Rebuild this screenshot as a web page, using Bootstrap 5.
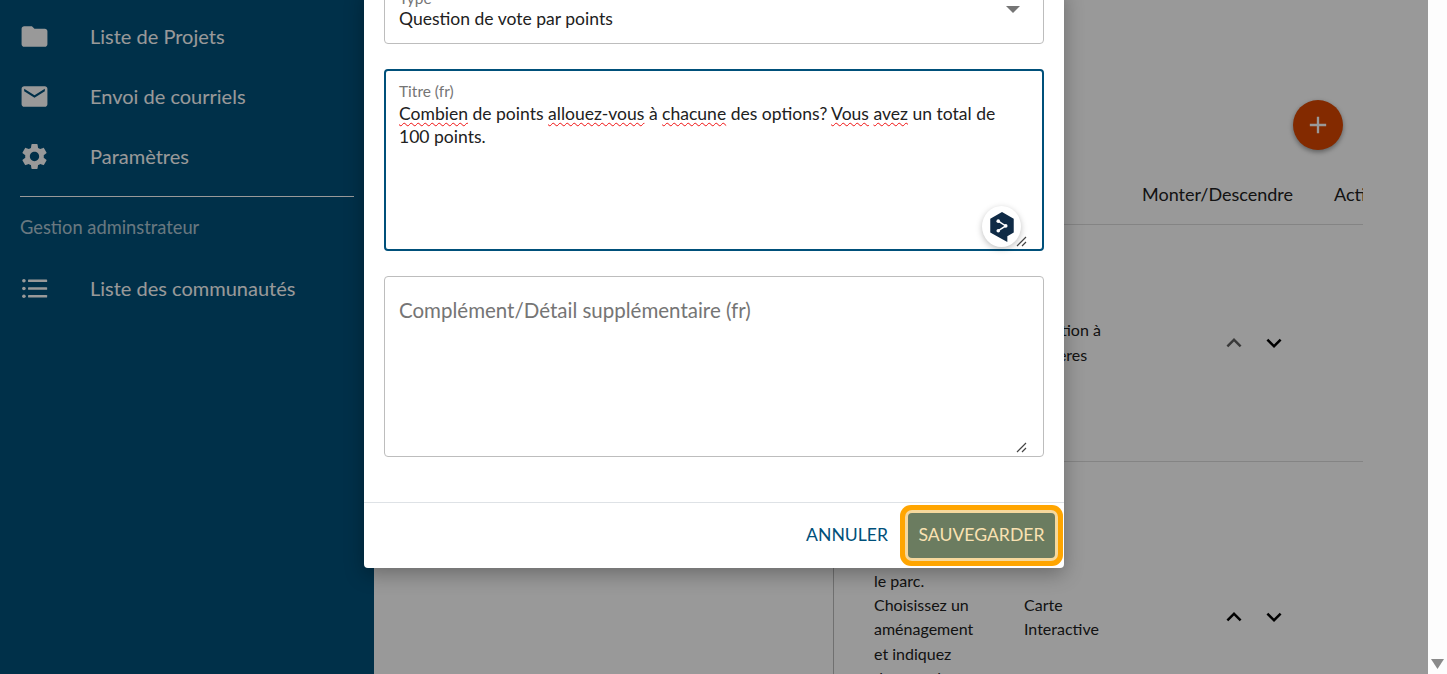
<!DOCTYPE html>
<html lang="fr">
<head>
    <meta charset="UTF-8">
    <meta name="viewport" content="width=device-width, initial-scale=1.0">
    <title>Liste de Projets</title>
    <link href="https://cdn.jsdelivr.net/npm/bootstrap@5.3.6/dist/css/bootstrap.min.css" rel="stylesheet">
    <style>
        html, body { height: 100%; overflow: hidden; }
        body { font-family: "Lato", "Liberation Sans", sans-serif; color: #212121; background: #fff; }
        .page-wrap { height: 674px; }
        .app-area { position: relative; overflow: hidden; }
        .fake-scroll { width: 19px; background: #fdfdfd; padding-bottom: 5px; }
        .fake-scroll svg { width: 13px; height: 10px; fill: #8a8a8a; }

        .side-bar { width: 374px; background: #00507a; color: #fff; padding: 6px 20px 0; }
        .side-item { height: 60px; font-size: 20px; }
        .side-item svg { width: 31px; height: 31px; fill: #fff; margin-left: -1px; margin-right: 40px; }
        .side-rule { border-top: 1px solid #fff; margin: 10px 0 0; opacity: 1; }
        .side-title { font-size: 18.3px; color: rgba(255, 255, 255, .7); line-height: 24px; margin: 18px 0 19px; }

        .blank-pane { width: 459px; }
        .list-pane { width: 530px; border-left: 1px solid #bbb; padding-top: 100px; overflow: hidden; }
        .add-btn { width: 50px; height: 50px; border-radius: 50%; background: #da4700; margin-right: 20px; box-shadow: 0 2px 5px rgba(0, 0, 0, .4); }
        .add-btn svg { width: 28px; height: 28px; fill: #fff; }
        .quest-table { table-layout: fixed; width: 640px; margin: 0; font-size: 16px; line-height: 24.3px; color: #212121; --bs-table-bg: transparent; --bs-table-color: #212121; }
        .quest-table th { font-size: 18px; font-weight: 400; height: 74px; padding: 0 0 17px; vertical-align: bottom; border-bottom: 1px solid #ddd; }
        .quest-table td { padding: 10px 0; vertical-align: middle; border-bottom: 1px solid #ddd; }
        .quest-table .col-one { padding-left: 40px; padding-right: 40px; }
        .quest-table .col-two { padding-right: 16px; }
        .row-first td { height: 237px; }
        .row-second td { height: 312px; }
        .move-btns { padding-left: 77px; gap: 10px; }
        .move-btns svg { width: 30px; height: 30px; fill: #000; }
        .move-btns .is-off { opacity: .62; }

        .veil { position: absolute; inset: 0; background: rgba(0, 0, 0, .4); }
        .edit-dialog { position: absolute; left: 364px; bottom: 106px; width: 700px; border: 0; border-radius: 4px; background: #fff; box-shadow: 0 6px 20px rgba(0, 0, 0, .3); }
        .edit-body { padding: 0 20px 45px; gap: 25px; }
        .edit-field { position: relative; border: 1px solid #bdbdbd; border-radius: 4px; padding: 0 14px; color: #212121; background: #fff; }
        .field-type { height: 56px; padding-top: 1px; }
        .field-type .field-label { line-height: 16px; margin-bottom: 1px; }
        .field-title { height: 182px; border: 2px solid #00507a; padding: 12px 13px 0; }
        .field-title .field-label { margin-bottom: 2px; }
        .field-extra { height: 181px; padding-top: 19px; font-size: 20.5px; line-height: 28px; color: #757575; }
        .field-label { font-size: 15.5px; color: #757575; line-height: 17px; }
        .field-value { font-size: 17.55px; line-height: 23px; }
        .spell { text-decoration: underline wavy #f01010 1px; text-underline-offset: 2px; text-decoration-skip-ink: none; }
        .caret-down { position: absolute; right: 23px; top: 17px; width: 0; height: 0; border-left: 7px solid transparent; border-right: 7px solid transparent; border-top: 7px solid #757575; }
        .grip { position: absolute; right: 15px; bottom: 2px; width: 11px; height: 11px; stroke: #444; stroke-width: 1.2; fill: none; }
        .field-extra .grip { right: 16px; bottom: 3px; }
        .deepl-spot { position: absolute; right: 21px; bottom: 2px; width: 39px; height: 41px; border-radius: 50%; background: #fff; box-shadow: 0 2px 6px rgba(0, 0, 0, .25); }
        .deepl-spot svg { width: 26px; height: 32px; }

        .edit-foot { height: 66px; padding: 0 9px 0 0; gap: 20px; border-top: 1px solid #dee2e6; }
        .btn-undo { font-size: 17.6px; color: #00507a; padding: 0; border: 0; }
        .btn-undo:hover { color: #00507a; }
        .btn-save { font-size: 17.6px; width: 147px; height: 45px; padding: 0; border: 0; border-radius: 4px; background: #6b7c60; color: #fae2b2; box-shadow: 0 0 0 3px #f6d89c, 0 0 0 8px #ffa500; }
        .btn-save:hover { background: #6b7c60; color: #fae2b2; }
    </style>
</head>
<body>
    <div class="page-wrap d-flex">
        <div class="app-area flex-grow-1 d-flex">
            <nav class="side-bar flex-shrink-0">
                <div class="side-item d-flex align-items-center">
                    <svg viewBox="0 0 24 24"><path d="M10 4H4c-1.1 0-1.99.9-1.99 2L2 18c0 1.1.9 2 2 2h16c1.1 0 2-.9 2-2V8c0-1.1-.9-2-2-2h-8l-2-2z"/></svg>
                    <span>Liste de Projets</span>
                </div>
                <div class="side-item d-flex align-items-center">
                    <svg viewBox="0 0 24 24"><path d="M20 4H4c-1.1 0-1.99.9-1.99 2L2 18c0 1.1.9 2 2 2h16c1.1 0 2-.9 2-2V6c0-1.1-.9-2-2-2zm0 4l-8 5-8-5V6l8 5 8-5v2z"/></svg>
                    <span>Envoi de courriels</span>
                </div>
                <div class="side-item d-flex align-items-center">
                    <svg viewBox="0 0 24 24"><path d="M19.14 12.94c.04-.3.06-.61.06-.94 0-.32-.02-.64-.07-.94l2.03-1.58c.18-.14.23-.41.12-.61l-1.92-3.32c-.12-.22-.37-.29-.59-.22l-2.39.96c-.5-.38-1.03-.7-1.62-.94l-.36-2.54c-.04-.24-.24-.41-.48-.41h-3.84c-.24 0-.43.17-.47.41l-.36 2.54c-.59.24-1.13.57-1.62.94l-2.39-.96c-.22-.08-.47 0-.59.22L2.74 8.87c-.12.21-.08.47.12.61l2.03 1.58c-.05.3-.09.63-.09.94s.02.64.07.94l-2.03 1.58c-.18.14-.23.41-.12.61l1.92 3.32c.12.22.37.29.59.22l2.39-.96c.5.38 1.03.7 1.62.94l.36 2.54c.05.24.24.41.48.41h3.84c.24 0 .44-.17.47-.41l.36-2.54c.59-.24 1.13-.56 1.62-.94l2.39.96c.22.08.47 0 .59-.22l1.92-3.32c.12-.22.07-.47-.12-.61l-2.01-1.58zM12 15.6c-1.98 0-3.6-1.62-3.6-3.6s1.62-3.6 3.6-3.6 3.6 1.62 3.6 3.6-1.62 3.6-3.6 3.6z"/></svg>
                    <span>Paramètres</span>
                </div>
                <hr class="side-rule">
                <div class="side-title">Gestion adminstrateur</div>
                <div class="side-item d-flex align-items-center">
                    <svg viewBox="0 0 24 24"><circle cx="3.8" cy="6" r="1.4"/><circle cx="3.8" cy="12" r="1.4"/><circle cx="3.8" cy="18" r="1.4"/><rect x="7" y="5" width="14.8" height="2" rx=".5"/><rect x="7" y="11" width="14.8" height="2" rx=".5"/><rect x="7" y="17" width="14.8" height="2" rx=".5"/></svg>
                    <span>Liste des communautés</span>
                </div>
            </nav>

            <main class="d-flex flex-grow-1">
                <div class="blank-pane flex-shrink-0"></div>
                <section class="list-pane flex-shrink-0">
                    <div class="d-flex justify-content-end">
                        <div class="add-btn d-flex align-items-center justify-content-center">
                            <svg viewBox="0 0 24 24"><path d="M19 13h-6v6h-2v-6H5v-2h6V5h2v6h6v2z"/></svg>
                        </div>
                    </div>
                    <table class="table quest-table">
                        <colgroup><col style="width:190px"><col style="width:118px"><col style="width:192px"><col style="width:140px"></colgroup>
                        <thead>
                            <tr>
                                <th class="col-one">Question</th>
                                <th>Type</th>
                                <th>Monter/Descendre</th>
                                <th>Actions</th>
                            </tr>
                        </thead>
                        <tbody>
                            <tr class="row-first">
                                <td class="col-one">Quel est votre niveau de satisfaction pour chacun des critères suivants?</td>
                                <td class="col-two">Question à manières</td>
                                <td>
                                    <div class="move-btns d-flex">
                                        <svg class="is-off" viewBox="0 0 24 24"><path d="M12 8l-6 6 1.41 1.41L12 10.83l4.59 4.58L18 14z"/></svg>
                                        <svg viewBox="0 0 24 24"><path d="M16.59 8.59L12 13.17 7.41 8.59 6 10l6 6 6-6z"/></svg>
                                    </div>
                                </td>
                                <td></td>
                            </tr>
                            <tr class="row-second">
                                <td class="col-one">Voici la carte<br>du quartier<br>et des sentiers<br>situés dans<br>le parc. Choisissez un aménagement et indiquez dans quel secteur il devrait se trouver.</td>
                                <td class="col-two">Carte Interactive</td>
                                <td>
                                    <div class="move-btns d-flex">
                                        <svg viewBox="0 0 24 24"><path d="M12 8l-6 6 1.41 1.41L12 10.83l4.59 4.58L18 14z"/></svg>
                                        <svg viewBox="0 0 24 24"><path d="M16.59 8.59L12 13.17 7.41 8.59 6 10l6 6 6-6z"/></svg>
                                    </div>
                                </td>
                                <td></td>
                            </tr>
                        </tbody>
                    </table>
                </section>
            </main>

            <div class="veil"></div>

            <div class="edit-dialog modal-content">
                <div class="edit-body modal-body d-flex flex-column">
                    <div class="edit-field field-type">
                        <div class="field-label">Type</div>
                        <div class="field-value">Question de vote par points</div>
                        <span class="caret-down"></span>
                    </div>
                    <div class="edit-field field-title">
                        <div class="field-label">Titre (fr)</div>
                        <div class="field-value"><span class="spell">Combien</span> de points <span class="spell">allouez-vous</span> à <span class="spell">chacune</span> des options? <span class="spell">Vous</span> <span class="spell">avez</span> un total de 100 points.</div>
                        <div class="deepl-spot d-flex align-items-center justify-content-center">
                            <svg viewBox="0 0 24 30">
                                <path fill="#0f2b46" d="M12 1l11 6.2v13L17 23.6V29l-5.5-3L1 20.2v-13z"/>
                                <path d="M8.5 9.5l7 4.5-7 4.5" fill="none" stroke="#fff" stroke-width="1.4"/>
                                <circle cx="8.5" cy="9.5" r="1.7" fill="#fff"/><circle cx="15.5" cy="14" r="1.7" fill="#fff"/><circle cx="8.5" cy="18.5" r="1.7" fill="#fff"/>
                            </svg>
                        </div>
                        <svg class="grip" viewBox="0 0 11 11"><path d="M1 10l9-9M6 10l4-4"/></svg>
                    </div>
                    <div class="edit-field field-extra">
                        Complément/Détail supplémentaire (fr)
                        <svg class="grip" viewBox="0 0 11 11"><path d="M1 10l9-9M6 10l4-4"/></svg>
                    </div>
                </div>
                <div class="edit-foot modal-footer flex-nowrap">
                    <button type="button" class="btn btn-undo">ANNULER</button>
                    <button type="button" class="btn btn-save">SAUVEGARDER</button>
                </div>
            </div>
        </div>
        <div class="fake-scroll flex-shrink-0 d-flex align-items-end justify-content-center">
            <svg viewBox="0 0 13 10"><path d="M0 0h13L6.5 10z"/></svg>
        </div>
    </div>

    <script src="https://cdn.jsdelivr.net/npm/bootstrap@5.3.6/dist/js/bootstrap.bundle.min.js"></script>
</body>
</html>
